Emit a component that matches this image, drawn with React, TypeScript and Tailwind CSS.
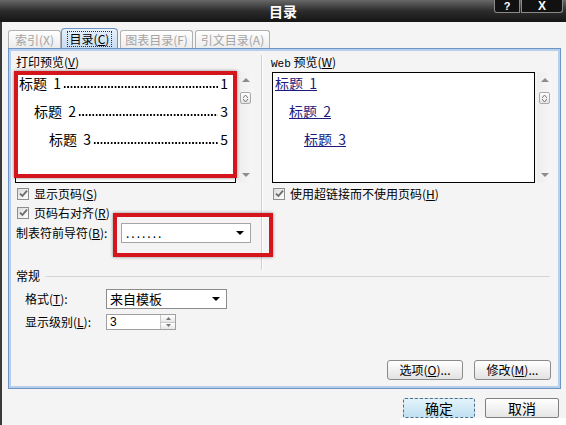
import React from "react";

function Key({ k }: { k: string }) {
  return <span className="underline">{k}</span>;
}

function Check() {
  return (
    <span className="w-[12px] h-[12px] shrink-0 border border-[#8e8e8e] bg-linear-to-br from-[#dcdcdc] to-white flex items-center justify-center">
      <svg width="9" height="9" viewBox="0 0 9 9">
        <path d="M1 4.6 L3.4 7 L8 1.6" stroke="#6c6c6c" strokeWidth="1.8" fill="none" />
      </svg>
    </span>
  );
}

function DownArrow({ color = "#000" }: { color?: string }) {
  return (
    <svg width="8" height="4" viewBox="0 0 8 4">
      <path d="M0 0h8L4 4z" fill={color} />
    </svg>
  );
}

function UpArrow({ color = "#000" }: { color?: string }) {
  return (
    <svg width="8" height="4" viewBox="0 0 8 4">
      <path d="M0 4h8L4 0z" fill={color} />
    </svg>
  );
}

function ScrollBar() {
  return (
    <div className="w-[15px] h-[111px] flex flex-col items-center bg-linear-to-r from-[#eeeeee] to-[#f6f6f6]">
      <div className="mt-[6px]">
        <UpArrow color="#8c8c8c" />
      </div>
      <div className="mt-[10px] w-[11px] h-[12px] border border-[#a9a9a9] rounded-[2px] bg-linear-to-b from-white to-[#e4e4e4] flex flex-col items-center justify-center gap-[1px]">
        <svg width="5" height="3" viewBox="0 0 5 3">
          <path d="M0 3L2.5 0L5 3" stroke="#777" fill="none" />
        </svg>
        <svg width="5" height="3" viewBox="0 0 5 3">
          <path d="M0 0L2.5 3L5 0" stroke="#777" fill="none" />
        </svg>
      </div>
      <div className="mt-auto mb-[6px]">
        <DownArrow color="#8c8c8c" />
      </div>
    </div>
  );
}

// one line of the print preview: heading, dotted leader, page number
function Leader({ indent, num, page }: { indent: string; num: string; page: string }) {
  return (
    <div className={`h-[16px] flex items-center text-[14px] leading-[16px] ${indent}`}>
      <span className="shrink-0">标题&nbsp;&nbsp;{num}</span>
      <span className="flex-1 self-end mb-[3px] ml-[2px] mr-[2px] h-[2px] bg-[radial-gradient(circle,#000_0.9px,transparent_1.2px)] bg-[length:3.4px_2px] bg-repeat-x" />
      <span className="shrink-0">{page}</span>
    </div>
  );
}

function Btn({ children, w }: { children: React.ReactNode; w: string }) {
  return (
    <div
      className={`${w} h-[20px] border border-[#8a8a8a] rounded-[3px] bg-linear-to-b from-white to-[#e2e2e2] flex items-center justify-center text-[12px]`}
    >
      {children}
    </div>
  );
}

export default function App() {
  return (
    <div className="w-[566px] h-[425px] overflow-hidden flex flex-col bg-[#f4f4f4] text-black font-[family-name:'Noto_Sans_CJK_SC','Liberation_Sans',sans-serif]">
      {/* title bar */}
      <div className="relative h-[22px] shrink-0 flex items-center justify-center bg-linear-to-b from-[#686868] via-[#2c2c2c] to-[#151515]">
        <span className="text-white font-bold text-[14px] leading-none">目录</span>
        <div className="absolute right-[3px] top-0 flex gap-[1px]">
          <div className="w-[26px] h-[13px] bg-[#111] border border-t-0 border-[#8a8a8a] rounded-bl-[3px] flex items-center justify-center text-white text-[11px] font-bold leading-none font-['Liberation_Sans']">
            ?
          </div>
          <div className="w-[42px] h-[13px] bg-[#111] border border-t-0 border-[#8a8a8a] rounded-br-[3px] flex items-center justify-center text-white text-[12px] font-bold leading-none font-['Liberation_Sans']">
            X
          </div>
        </div>
      </div>

      {/* body */}
      <div className="flex-1 flex flex-col border-l-[2px] border-[#3a3a3a] pl-[6px] pr-[5px]">
        {/* tabs */}
        <div className="mt-[6px] h-[20px] flex items-end text-[12px]">
          <div className="w-[53px] h-[18px] border border-b-0 border-[#b0b0b0] rounded-t-[3px] bg-linear-to-b from-white to-[#ececec] text-[#a4a4a4] flex items-center justify-center">
            索引(X)
          </div>
          <div className="w-[57px] h-[20px] border border-b-0 border-[#6f94c4] rounded-t-[4px] bg-linear-to-b from-[#e6f0fa] to-[#c9dcf1] flex items-center justify-center">
            <span className="border border-dotted border-[#333] px-[2px] leading-[14px]">
              目录(<Key k="C" />)
            </span>
          </div>
          <div className="ml-[2px] w-[73px] h-[18px] border border-b-0 border-[#b0b0b0] rounded-t-[3px] bg-linear-to-b from-white to-[#ececec] text-[#a4a4a4] flex items-center justify-center">
            图表目录(F)
          </div>
          <div className="ml-[2px] w-[75px] h-[18px] border border-b-0 border-[#b0b0b0] rounded-t-[3px] bg-linear-to-b from-white to-[#ececec] text-[#a4a4a4] flex items-center justify-center">
            引文目录(A)
          </div>
        </div>

        {/* panel */}
        <div className="h-[341px] border border-[#6f93c2]">
          <div className="h-full border-2 border-[#b6cfec] flex flex-col pl-[4px] text-[12px]">
            {/* top section */}
            <div className="flex">
              {/* left column */}
              <div className="w-[246px] pt-[4px] pb-[26px] flex flex-col">
                <div className="h-[14px] leading-[14px] ml-[1px]">
                  打印预览(<Key k="V" />)
                </div>
                <div className="mt-[3px] flex gap-[2px]">
                  <div className="relative w-[221px] h-[111px] border border-black bg-white pt-[2px] pr-[7px] flex flex-col gap-[12px]">
                    <Leader indent="pl-[3px]" num="1" page="1" />
                    <Leader indent="pl-[18px]" num="2" page="3" />
                    <Leader indent="pl-[33px]" num="3" page="5" />
                    <div className="absolute left-[-2px] top-[-2px] w-[223px] h-[107px] border-[4px] border-[#d4161c] shadow-[0_0_3px_rgba(0,0,0,0.45)]" />
                  </div>
                  <ScrollBar />
                </div>
                <div className="mt-[1px] h-[19px] flex items-center ml-[2px] gap-[5px]">
                  <Check />
                  <span>
                    显示页码(<Key k="S" />)
                  </span>
                </div>
                <div className="h-[19px] flex items-center ml-[2px] gap-[5px]">
                  <Check />
                  <span>
                    页码右对齐(<Key k="R" />)
                  </span>
                </div>
                <div className="relative h-[22px] flex items-center ml-[1px]">
                  <span className="w-[105px]">
                    制表符前导符(<Key k="B" />):
                  </span>
                  <div className="w-[130px] h-[20px] border border-[#a5a5a5] bg-white flex items-center pl-[4px] pr-[6px]">
                    <span className="flex-1 tracking-[2px] leading-none">.......</span>
                    <DownArrow />
                  </div>
                  <div className="absolute left-[97px] top-[-9px] w-[160px] h-[44px] border-[4px] border-[#d4161c] shadow-[0_0_3px_rgba(0,0,0,0.45)] z-10" />
                </div>
              </div>

              {/* divider */}
              <div className="mt-[4px] w-[2px] border-l border-[#d0d0d0] border-r border-r-white" />

              {/* right column */}
              <div className="flex-1 pt-[4px] pl-[9px] flex flex-col">
                <div className="h-[14px] leading-[14px] -ml-[1px]">
                  <span className="font-['Liberation_Mono'] text-[11px]">Web</span> 预览(<Key k="W" />)
                </div>
                <div className="mt-[3px] flex gap-[2px]">
                  <div className="w-[263px] h-[111px] border border-black bg-white pt-[2px] flex flex-col gap-[12px] text-[14px] leading-[16px] text-[#1c1c80]">
                    <div className="h-[16px] pl-[2px]">
                      <span className="underline">标题&nbsp;&nbsp;1</span>
                    </div>
                    <div className="h-[16px] pl-[16px]">
                      <span className="underline">标题&nbsp;&nbsp;2</span>
                    </div>
                    <div className="h-[16px] pl-[31px]">
                      <span className="underline">标题&nbsp;&nbsp;3</span>
                    </div>
                  </div>
                  <ScrollBar />
                </div>
                <div className="mt-[1px] h-[19px] flex items-center ml-[1px] gap-[5px]">
                  <Check />
                  <span>
                    使用超链接而不使用页码(<Key k="H" />)
                  </span>
                </div>
              </div>
            </div>

            {/* general section */}
            <div className="h-[12px] flex items-center ml-[1px]">
              <span className="leading-none">常规</span>
              <div className="flex-1 h-px bg-[#d6d6d6] ml-[5px] mr-[8px]" />
            </div>
            <div className="mt-[7px] h-[20px] flex items-center ml-[10px]">
              <span className="w-[81px]">
                格式(<Key k="T" />):
              </span>
              <div className="w-[121px] h-[20px] border border-[#8c8c8c] bg-white flex items-center pl-[3px] pr-[6px] text-[13px]">
                <span className="flex-1">来自模板</span>
                <DownArrow />
              </div>
            </div>
            <div className="mt-[5px] h-[16px] flex items-center ml-[10px]">
              <span className="w-[81px]">
                显示级别(<Key k="L" />):
              </span>
              <div className="w-[70px] h-[16px] border border-[#a0a0a0] bg-white flex items-center">
                <span className="flex-1 pl-[3px] leading-none font-['Liberation_Sans']">3</span>
                <div className="w-[15px] h-full flex flex-col border-l border-[#c8c8c8]">
                  <div className="flex-1 flex items-center justify-center bg-linear-to-b from-white to-[#e6e6e6] border-b border-[#c8c8c8]">
                    <svg width="5" height="3" viewBox="0 0 5 3">
                      <path d="M0 3h5L2.5 0z" fill="#777" />
                    </svg>
                  </div>
                  <div className="flex-1 flex items-center justify-center bg-linear-to-b from-white to-[#e6e6e6]">
                    <svg width="5" height="3" viewBox="0 0 5 3">
                      <path d="M0 0h5L2.5 3z" fill="#777" />
                    </svg>
                  </div>
                </div>
              </div>
            </div>

            {/* option buttons */}
            <div className="mt-auto mb-[6px] mr-[7px] flex justify-end gap-[11px]">
              <Btn w="w-[76px]">
                选项(<Key k="O" />)...
              </Btn>
              <Btn w="w-[77px]">
                修改(<Key k="M" />)...
              </Btn>
            </div>
          </div>
        </div>

        {/* dialog buttons */}
        <div className="mt-[9px] h-[20px] flex justify-end gap-[10px] pr-[2px] text-[14px]">
          <div className="w-[72px] h-[20px] border border-dashed border-[#4d6f88] rounded-[2px] bg-linear-to-b from-[#e4f3fb] to-[#bfe0f1] flex items-center justify-center">
            确定
          </div>
          <div className="w-[74px] h-[20px] border border-[#808080] rounded-[2px] bg-linear-to-b from-white to-[#e6e6e6] flex items-center justify-center">
            取消
          </div>
        </div>
        <div className="mt-auto -mr-[5px] self-end w-[166px] h-[7px] bg-white" />
      </div>
    </div>
  );
}
